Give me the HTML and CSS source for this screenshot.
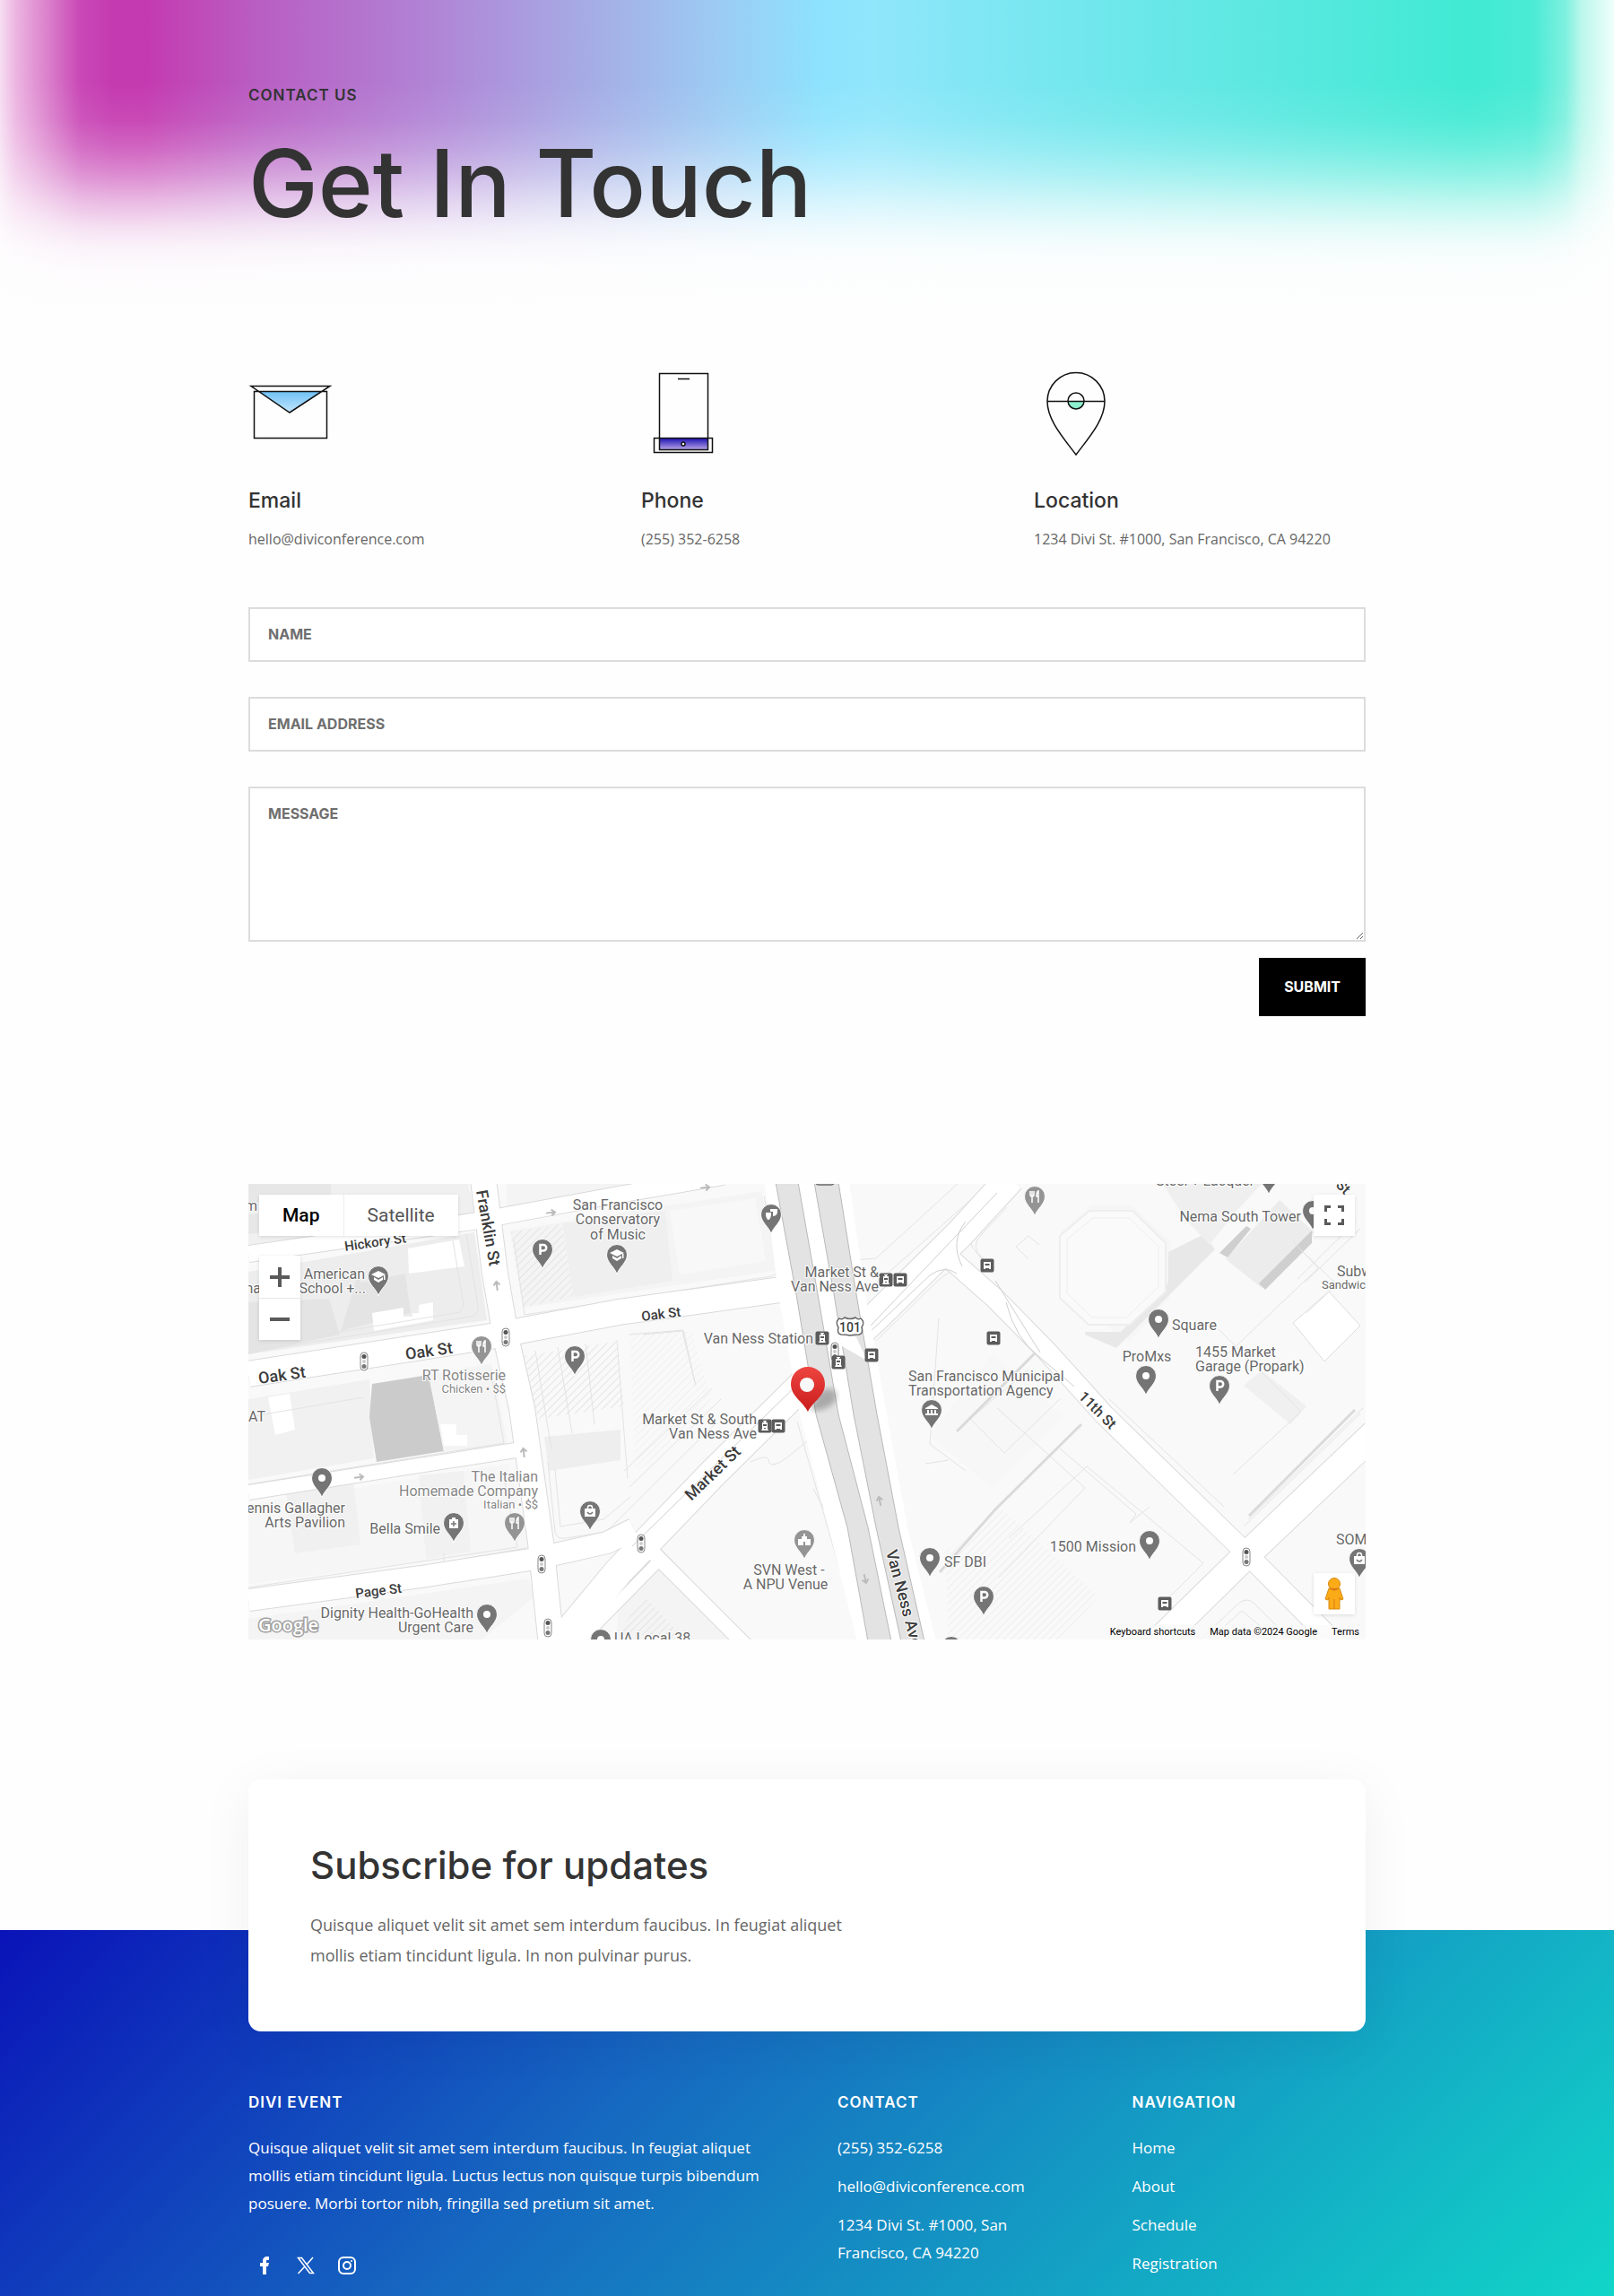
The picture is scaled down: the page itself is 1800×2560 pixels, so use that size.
FILE: index.html
```html
<!DOCTYPE html>
<html lang="en">

<head>
    <meta charset="UTF-8">
    <meta name="viewport" content="width=device-width, initial-scale=1.0">
    <title>Contact Us - Divi Event</title>
    <link rel="stylesheet" href="styles.css">
</head>

<body>
    <header class="hero">
        <div class="container">
            <p class="eyebrow">Contact Us</p>
            <h1>Get In Touch</h1>
        </div>
    </header>

    <main>
        <section class="container info">
            <div class="info-item">
                <svg class="info-icon" viewBox="0 0 94 94" aria-hidden="true">
                    <defs>
                        <linearGradient id="mailFill" x1="0" y1="0" x2="0" y2="1">
                            <stop offset="0" stop-color="#6cc0f6" />
                            <stop offset="1" stop-color="#c4e6fd" />
                        </linearGradient>
                    </defs>
                    <path d="M11 22h71L46 46z" fill="url(#mailFill)" />
                    <path d="M6.500 22.500h81v52h-81zM3 16.500h88L46 46z" class="line" />
                </svg>
                <h2>Email</h2>
                <p>hello@diviconference.com</p>
            </div>
            <div class="info-item">
                <svg class="info-icon" viewBox="0 0 94 94" aria-hidden="true">
                    <defs>
                        <linearGradient id="phoneFill" x1="0" y1="0" x2="0" y2="1">
                            <stop offset="0" stop-color="#1d10b4" />
                            <stop offset="1" stop-color="#b9a6e6" />
                        </linearGradient>
                    </defs>
                    <path d="M20.500 74.500h54v13h-54z" fill="url(#phoneFill)" />
                    <path d="M20.500 2.500h54v85h-54zM14.500 74.500h65v16h-65zM41 8.500h13" class="line" />
                    <circle cx="47" cy="81" r="2" class="line white" />
                </svg>
                <h2>Phone</h2>
                <p>(255) 352-6258</p>
            </div>
            <div class="info-item">
                <svg class="info-icon" viewBox="0 0 94 94" aria-hidden="true">
                    <path d="M38 33.500h18a9 9 0 0 1-18 0z" fill="#8df0cf" />
                    <path d="M47 93C32 73 15 54 15 33.500a32 32 0 0 1 64 0C79 54 62 73 47 93zM15 33.500h64" class="line" />
                    <circle cx="47" cy="33" r="9" class="line" />
                </svg>
                <h2>Location</h2>
                <p>1234 Divi St. #1000, San Francisco, CA 94220</p>
            </div>
        </section>

        <form class="container contact-form">
            <input type="text" name="name" placeholder="NAME" aria-label="Name">
            <input type="email" name="email" placeholder="EMAIL ADDRESS" aria-label="Email address">
            <textarea name="message" placeholder="MESSAGE" aria-label="Message"></textarea>
            <button type="submit" class="submit">SUBMIT</button>
        </form>

        <section class="container">
            <div class="map">
                <svg class="map-canvas" viewBox="0 0 1246 508" preserveAspectRatio="xMidYMid slice" role="img" aria-label="Map">
                    <defs>
                        <pattern id="hatch" width="6" height="6" patternUnits="userSpaceOnUse" patternTransform="rotate(45)">
                            <path d="M0 0v6" stroke="#e4e4e4" stroke-width="2" />
                        </pattern>
                        <linearGradient id="marker" x1="0" y1="0" x2="0" y2="1">
                            <stop offset="0" stop-color="#ee4540" />
                            <stop offset="1" stop-color="#c91c1c" />
                        </linearGradient>
                        <filter id="soft">
                            <feGaussianBlur stdDeviation="3" />
                        </filter>
                        <g id="pin-dot">
                            <path class="pin" d="M0 22C-2 14-11.500 9-11.500 0a11.500 11.500 0 0 1 23 0C11.500 9 2 14 0 22z" />
                            <circle r="4" fill="#fff" />
                        </g>
                        <g id="pin-p">
                            <path class="pin" d="M0 22C-2 14-11.500 9-11.500 0a11.500 11.500 0 0 1 23 0C11.500 9 2 14 0 22z" />
                            <path d="M-2.500 6V-5H1a3 3 0 0 1 0 6.500h-3.500" fill="none" stroke="#fff" stroke-width="2.500" />
                        </g>
                        <g id="pin-school">
                            <path class="pin" d="M0 22C-2 14-11.500 9-11.500 0a11.500 11.500 0 0 1 23 0C11.500 9 2 14 0 22z" />
                            <path d="M0-6l8 4-8 4-8-4zM-5 1l5 3 5-3v3L0 7l-5-3zM6-1h1.500v5H6z" fill="#fff" />
                        </g>
                        <g id="pin-food">
                            <path class="pin pale" d="M0 22C-2 14-11.500 9-11.500 0a11.500 11.500 0 0 1 23 0C11.500 9 2 14 0 22z" />
                            <path d="M-5-6v4q0 2 2 2t2-2v-4M-3-6V7M4 7V-6q-2 1-2 6h2" fill="none" stroke="#fff" stroke-width="1.500" />
                        </g>
                        <g id="pin-bag">
                            <path class="pin" d="M0 22C-2 14-11.500 9-11.500 0a11.500 11.500 0 0 1 23 0C11.500 9 2 14 0 22z" />
                            <path d="M-6-3H6V6H-6z" fill="#fff" />
                            <path d="M-2.500-3v-1a2.500 2.500 0 0 1 5 0v1" fill="none" stroke="#fff" stroke-width="1.500" />
                            <path d="M-3 1q3 4 6 0" fill="none" stroke="#757575" stroke-width="1.500" />
                        </g>
                        <g id="pin-bank">
                            <path class="pin" d="M0 22C-2 14-11.500 9-11.500 0a11.500 11.500 0 0 1 23 0C11.500 9 2 14 0 22z" />
                            <path d="M-7-2l7-4 7 4v1H-7zM-5 0h2v4h-2zM-1 0h2v4h-2zM3 0h2v4H3zM-7 4H7v2H-7z" fill="#fff" />
                        </g>
                        <g id="pin-med">
                            <path class="pin" d="M0 22C-2 14-11.500 9-11.500 0a11.500 11.500 0 0 1 23 0C11.500 9 2 14 0 22z" />
                            <path d="M-5-4H5V6H-5zM-2-6h4v2h-4z" fill="#fff" />
                            <path d="M0-2v6M-3 1h6" stroke="#757575" stroke-width="1.500" />
                        </g>
                        <g id="pin-venue">
                            <path class="pin pale" d="M0 22C-2 14-11.500 9-11.500 0a11.500 11.500 0 0 1 23 0C11.500 9 2 14 0 22z" />
                            <path d="M-7 6v-7h4v-3h2v-3h2v3h2v3h4v7H1V2h-2v4z" fill="#fff" />
                        </g>
                        <g id="pin-masks">
                            <path class="pin" d="M0 22C-2 14-11.500 9-11.500 0a11.500 11.500 0 0 1 23 0C11.500 9 2 14 0 22z" />
                            <path d="M-6-2h6v3q-1 5-3 5t-3-5zM-1-6h8v4q-1 4-5 4v-5h-3z" fill="#fff" />
                        </g>
                        <g id="bus">
                            <rect x="-7.500" y="-7.500" width="15" height="15" rx="2" fill="#5c5c5c" />
                            <path d="M-4-4h8v8H2V3h-4v1h-2z" fill="#fff" />
                            <path d="M-2.500-2h5v2h-5z" fill="#5c5c5c" />
                        </g>
                        <g id="train">
                            <rect x="-7.500" y="-7.500" width="15" height="15" rx="2" fill="#5c5c5c" />
                            <path d="M-2-6h4v1H1v1h2v7l1 2h-8l1-2v-7h2v-1h-1z" fill="#fff" />
                            <path d="M-2-2h4v2h-4zM-1 2h2v1h-2z" fill="#5c5c5c" />
                        </g>
                        <g id="light">
                            <rect x="-4" y="-10" width="8" height="20" rx="4" fill="#fff" stroke="#888" />
                            <circle cy="-5.500" r="2.500" fill="#555" />
                            <circle r="2" fill="#ccc" />
                            <circle cy="5.500" r="2.500" fill="#777" />
                        </g>
                        <path id="arrow" d="M-6 0H4M0-3.500L4 0 0 3.500" fill="none" stroke="#bbb" stroke-width="2" />
                    </defs>

                    <rect width="1246" height="508" fill="#f9f9f9" />

                    <!-- blocks and buildings -->
                    <g class="blocks">
                        <path d="M0 0h245l8 34L0 68z" fill="#f0f0f0" />
                        <path d="M0 0h92v12L0 22zM0 56l90-12v-16L0 34z" fill="#e7e7e7" />
                        <path d="M0 98l252-44 14 98L0 190z" fill="#ededed" />
                        <path d="M0 132l90-4 12 40-102 22zM125 92v18l50-10 6 44-78 20" fill="#e4e4e4" />
                        <path d="M178 72l57-10 6 30-62 8zM138 144l35-6v10h10v-4h7v-9l16-3v20l-66 12z" fill="#fff" />
                        <path d="M0 240l135-22 5 88L0 330z" fill="#f1f1f1" />
                        <path d="M22 238l24-4 6 40-22 6z" fill="#fff" />
                        <path d="M138 223l63-10 17 85-75 12-8-50z" fill="#cbcbcb" />
                        <path d="M201 213l70-13 18 90-71 9z" fill="#f4f4f4" />
                        <path d="M214 268h18v12h12v12h-26z" fill="#fff" />
                        <path d="M0 358l290-46 24 95L0 446z" fill="#f6f6f6" />
                        <path d="M42 344l75-12 8 70-73 10z" fill="#f0f0f0" />
                        <path d="M190 325l50-5 8 90-50 8z" fill="#f1f1f1" />
                        <path d="M0 485l312-45 8 20-60 48H0z" fill="#f4f4f4" />
                        <path d="M288 0h215l-215 27zM292 52l280-44 20 88-285 42z" fill="#f4f4f4" />
                        <path d="M350 44l115-14 8 78-110 18z" fill="#efefef" />
                        <path d="M470 30l95-14 12 70-96 15z" fill="#f8f8f8" />
                        <path d="M292 54l57-9 14 80-57 13z" fill="url(#hatch)" />
                        <path d="M305 192l106-16 8 72-96 14z" fill="url(#hatch)" />
                        <path d="M330 282l85-8v34l-80 12z" fill="#eee" />
                        <path d="M425 165h70l22 80-85 78z" fill="url(#hatch)" opacity=".4" />
                        <path d="M830 190l80 70-80 80-70-60z" fill="#f7f7f7" />
                        <path d="M778 410l60-50 110 100-40 48H780z" fill="url(#hatch)" opacity=".5" />
                        <path d="M414 430l35-20 95 98H410z" fill="#f4f4f4" />
                        <path d="M412 500l30-40 45 48z" fill="url(#hatch)" />
                        <path d="M905 54l35-30h46l42 40v62l-45 50-60-40-18-26z" fill="#f6f6f6" />
                        <path d="M933 165h40l53-55v-34l40-20 12 17-110 110-35-15z" fill="#e8e8e8" />
                        <path d="M905 58l33-28h48l37 36v54l-40 37h-46l-32-30z" fill="#fafafa" stroke="#eee" stroke-width="2" />
                        <path d="M913 62l29-24h40l33 32v45l-36 34h-38l-28-27z" fill="none" stroke="#eee" />
                        <path d="M1020 0h110l-28 30-30 38-28-30z" fill="#efefef" />
                        <path d="M1090 84l60-66 38 36-58 62z" fill="#ececec" />
                        <path d="M1127 111l59-59v14l-52 52z" fill="#cfcfcf" />
                        <path d="M1083 77l30-30 5 3-26 32z" fill="#cfcfcf" />
                        <path d="M1110 225l20-17 50 40-18 20z" fill="#f0f0f0" />
                        <path d="M1165 155l40-35 35 38-40 40z" fill="#fff" stroke="#ddd" />
                    </g>
                    <g class="outlines">
                        <path d="M278 58l14 96q2 9 12 7l300-46M296 62l12 84 275-43q12-3 9-14L575 14" />
                        <path d="M0 188l248-40q10-2 8-12L243 56M0 182l236-39 4-8-12-72" />
                        <path d="M0 260l128-22M0 335l285-46-15-82M0 450l300-45-15-78M218 412v10l92-16" />
                        <path d="M306 190l18 98M320 186l18 110M345 182l16 96M376 178l10 90M411 174l12 155" />
                        <path d="M334 310l8 78q2 9 12 7l45-7L520 268M342 318l6 64 48-8 30-25" />
                        <path d="M425 168l60-5 14 62M440 168l44-4 14 58M419 320l98-92M425 338l102-98" />
                        <path d="M450 410l98 98M458 405l100 103M413 452q24-18 20-40" />
                        <path d="M560 310q22-10 20 0 5 8 22-6l30-24" />
                        <path d="M675 85l25-2 92-84M690 120l130-115M700 175l70-68q22-20 38 0l80 78" />
                        <path d="M830 20q-30 24-23 50l24 30M846 26l-28 30q-14 14 0 26l12 14" />
                        <path d="M870 84l-14-14 14-12 12 10M890 185l38 40M905 240l-62 60-38-38 65-55" />
                        <path d="M1165 64l28 30-100 95M1174 74l40 38-34 32M1170 106l65-64M1178 110l62-60" />
                        <path d="M835 250l98 89-96 100M848 395l87-80 130 108-50 50M905 295l85 73-7 10 22-18" />
                        <path d="M1098 324l76-70-92-92M1115 374l128-124M1110 382l130-126M1088 360L960 240" />
                        <path d="M1062 508l42-40q10-8 18 0l36 36M1072 508l36-32 38 32" />
                        <path d="M630 340l90 168M612 265l70 243M770 150l-10 140 40 30M755 312l26-4" />
                    </g>
                    <path d="M880 186L790 276M929 268l-96 95-62 70M1234 252l-118 118" fill="none" stroke="#dadada" stroke-width="3" />

                    <!-- streets -->
                    <g class="street-edge">
                        <path d="M0 78L250 42 413 12 530-8" stroke-width="20" />
                        <path d="M0 212L270 170 413 143 615 115" stroke-width="30" />
                        <path d="M0 344L298 297" stroke-width="18" />
                        <path d="M0 464L193 438 320 418 400 400 430 385" stroke-width="26" />
                        <path d="M262-5L275 100 288 175 305 250 326 400 338 515" stroke-width="30" />
                        <path d="M340 520L413 432 516 325 620 222 700 148 793 56 850-6" stroke-width="34" />
                        <path d="M360 520L460 418" stroke-width="14" />
                        <path d="M440 400L560 520" stroke-width="18" />
                        <path d="M765 68L833 128 890 186 955 258 1113 412 1215 515" stroke-width="24" />
                        <path d="M1256 278L1113 414 1010 515" stroke-width="32" />
                    </g>
                    <g class="street">
                        <path d="M0 78L250 42 413 12 530-8" stroke-width="18" />
                        <path d="M0 212L270 170 413 143 615 115" stroke-width="28" />
                        <path d="M0 344L298 297" stroke-width="16" />
                        <path d="M0 464L193 438 320 418 400 400 430 385" stroke-width="24" />
                        <path d="M262-5L275 100 288 175 305 250 326 400 338 515" stroke-width="28" />
                        <path d="M340 520L413 432 516 325 620 222 700 148 793 56 850-6" stroke-width="32" />
                        <path d="M360 520L460 418" stroke-width="12" />
                        <path d="M440 400L560 520" stroke-width="16" />
                        <path d="M765 68L833 128 890 186 955 258 1113 412 1215 515" stroke-width="22" />
                        <path d="M1256 278L1113 414 1010 515" stroke-width="30" />
                    </g>
                    <path d="M428 404L620 216M694 158L835 10M800 42q-18 22-4 50M690 168l70-66q16-12 30-2M833 108l50 80M845 132q10 40 36 60l40 34" fill="none" stroke="#cfcfcf" />

                    <!-- Van Ness Ave -->
                    <path d="M576-2h94l18 125 24 134 23 126 32 127h-88l-32-127-32-126-24-134z" fill="#fff" />
                    <path d="M588-2h25l22 125 23 134 33 126 26 127h-26l-23-127-35-126-22-134zM631-2h27l20 125 23 134 24 126 29 127h-26l-28-127-25-126-22-134z" fill="#e3e3e3" stroke="#b9b9b9" />
                    <path d="M658 165l20 6 12 26-28-16zM644 155l10-12v14z" fill="#fff" />

                    <use href="#arrow" transform="translate(338 32) rotate(-6)" />
                    <use href="#arrow" transform="translate(510 4) rotate(-6)" />
                    <use href="#arrow" transform="translate(124 327) rotate(-8)" />
                    <use href="#arrow" transform="translate(277 113) rotate(-97)" />
                    <use href="#arrow" transform="translate(307 299) rotate(-97)" />
                    <use href="#arrow" transform="translate(704 353) rotate(-102)" />
                    <use href="#arrow" transform="translate(688 441) rotate(76)" />

                    <!-- traffic lights and transit -->
                    <use href="#light" x="129" y="198" />
                    <use href="#light" x="287" y="171" />
                    <use href="#light" x="327" y="424" />
                    <use href="#light" x="334" y="495" />
                    <use href="#light" x="438" y="401" />
                    <use href="#light" x="654" y="187" />
                    <use href="#light" x="1113" y="416" />
                    <use href="#train" x="711" y="107" />
                    <use href="#bus" x="727" y="107" />
                    <use href="#train" x="640" y="172" />
                    <use href="#train" x="658" y="199" />
                    <use href="#bus" x="695" y="191" />
                    <use href="#bus" x="824" y="91" />
                    <use href="#bus" x="831" y="172" />
                    <use href="#train" x="576" y="270" />
                    <use href="#bus" x="591" y="270" />
                    <use href="#bus" x="1022" y="468" />

                    <path d="M659 150q3 2 6-1 6 3 12 0 3 3 6 1 5 4 1 10 2 7-3 8-5 0-10 1-5-1-10-1-5-1-3-8-4-6 1-10z" fill="#fff" stroke="#666" stroke-width="1.500" />
                    <path d="M632-6q0 7 4 7h14q4 0 4-7" fill="#fff" stroke="#666" stroke-width="1.500" />

                    <!-- place pins -->
                    <use href="#pin-school" x="145" y="103" />
                    <use href="#pin-p" x="328" y="73" />
                    <use href="#pin-school" x="411" y="79" />
                    <use href="#pin-masks" x="583" y="34" />
                    <use href="#pin-food" x="260" y="181" />
                    <use href="#pin-p" x="364" y="192" />
                    <use href="#pin-dot" x="82" y="328" />
                    <use href="#pin-med" x="229" y="378" />
                    <use href="#pin-food" x="297" y="378" />
                    <use href="#pin-bag" x="381" y="365" />
                    <use href="#pin-dot" x="266" y="480" />
                    <use href="#pin-dot" x="393" y="508" />
                    <use href="#pin-bank" x="762" y="252" />
                    <use href="#pin-venue" x="620" y="397" />
                    <use href="#pin-dot" x="760" y="417" />
                    <use href="#pin-p" x="820" y="460" />
                    <use href="#pin-dot" x="784" y="516" />
                    <use href="#pin-food" x="877" y="14" />
                    <use href="#pin-dot" x="1138" y="-10" />
                    <use href="#pin-dot" x="1187" y="30" />
                    <use href="#pin-dot" x="1015" y="151" />
                    <use href="#pin-dot" x="1001" y="214" />
                    <use href="#pin-p" x="1083" y="225" />
                    <use href="#pin-dot" x="1005" y="398" />
                    <use href="#pin-bag" x="1239" y="418" />

                    <g class="road-name">
                        <text transform="translate(108 75) rotate(-8)" font-size="15">Hickory St</text>
                        <text transform="translate(254 8) rotate(80)" font-size="18">Franklin St</text>
                        <text transform="translate(12 223) rotate(-8)" font-size="18">Oak St</text>
                        <text transform="translate(176 196) rotate(-8)" font-size="18">Oak St</text>
                        <text transform="translate(439 153) rotate(-7)" font-size="15">Oak St</text>
                        <text transform="translate(120 462) rotate(-7)" font-size="15">Page St</text>
                        <text transform="translate(494 354) rotate(-44)" font-size="18">Market St</text>
                        <text transform="translate(925 238) rotate(45)" font-size="16">11th St</text>
                        <text transform="translate(711 410) rotate(75)" font-size="18">Van Ness Ave</text>
                        <text transform="translate(1212 2) rotate(45)" font-size="16">St</text>
                        <text x="671" y="165" font-size="14" text-anchor="middle">101</text>
                    </g>

                    <g class="place" text-anchor="middle">
                        <text x="412" y="29">San Francisco</text>
                        <text x="412" y="45">Conservatory</text>
                        <text x="412" y="62">of Music</text>
                        <text x="1002" y="198">ProMxs</text>
                        <text x="603" y="436">SVN West -</text>
                        <text x="599" y="452">A NPU Venue</text>
                    </g>
                    <g class="place" text-anchor="end">
                        <text x="10" y="30">m</text>
                        <text x="20" y="106">F</text>
                        <text x="14" y="122">na</text>
                        <text x="130" y="106">American</text>
                        <text x="131" y="122">School +...</text>
                        <text x="19" y="265">AT</text>
                        <text x="108" y="367">Dennis Gallagher</text>
                        <text x="108" y="383">Arts Pavilion</text>
                        <text x="214" y="390">Bella Smile</text>
                        <text x="251" y="484">Dignity Health-GoHealth</text>
                        <text x="251" y="500">Urgent Care</text>
                        <text x="703" y="104">Market St &amp;</text>
                        <text x="703" y="120">Van Ness Ave</text>
                        <text x="630" y="178">Van Ness Station</text>
                        <text x="567" y="268">Market St &amp; South</text>
                        <text x="567" y="284">Van Ness Ave</text>
                        <text x="1174" y="42">Nema South Tower</text>
                        <text x="1122" y="2">Steel + Lacquer</text>
                        <text x="990" y="410">1500 Mission</text>
                    </g>
                    <g class="place food" text-anchor="end">
                        <text x="287" y="219">RT Rotisserie</text>
                        <text x="287" y="233" class="small">Chicken • $$</text>
                        <text x="323" y="332">The Italian</text>
                        <text x="323" y="348">Homemade Company</text>
                        <text x="323" y="362" class="small">Italian • $$</text>
                    </g>
                    <g class="place">
                        <text x="736" y="220">San Francisco Municipal</text>
                        <text x="736" y="236">Transportation Agency</text>
                        <text x="1030" y="163">Square</text>
                        <text x="1056" y="193">1455 Market</text>
                        <text x="1056" y="209">Garage (Propark)</text>
                        <text x="776" y="427">SF DBI</text>
                        <text x="1213" y="402">SOMA</text>
                        <text x="1214" y="103">Subway</text>
                        <text x="1197" y="117" class="small">Sandwiches</text>
                        <text x="408" y="512">UA Local 38</text>
                    </g>
                    <text x="11" y="499" class="google">Google</text>

                    <!-- main marker -->
                    <path d="M626 252l10-20q16-8 20 2 2 14-22 19z" fill="#000" opacity=".25" filter="url(#soft)" />
                    <path d="M624 254C618 242 605 237 605 223a19 19 0 0 1 38 0C643 237 630 242 624 254z" fill="url(#marker)" />
                    <circle cx="623" cy="224" r="8" fill="#f8f8f8" />
                </svg>

                <div class="map-types">
                    <button type="button" class="active">Map</button>
                    <button type="button">Satellite</button>
                </div>
                <div class="map-zoom">
                    <button type="button" aria-label="Zoom in">
                        <svg viewBox="0 0 22 22"><path d="M9 0h4v9h9v4h-9v9H9v-9H0V9h9z" /></svg>
                    </button>
                    <button type="button" aria-label="Zoom out">
                        <svg viewBox="0 0 22 22"><path d="M0 9h22v4H0z" /></svg>
                    </button>
                </div>
                <button type="button" class="map-button fullscreen" aria-label="Toggle fullscreen view">
                    <svg viewBox="0 0 22 22"><path d="M0 0h7v3H3v4H0zM15 0h7v7h-3V3h-4zM0 15h3v4h4v3H0zM19 15h3v7h-7v-3h4z" /></svg>
                </button>
                <button type="button" class="map-button pegman" aria-label="Street View">
                    <svg viewBox="0 0 22 36">
                        <path d="M5 12h12l4 12-3 1-1-3v13H5V22l-1 3-3-1z" fill="#fbab18" stroke="#d98a10" />
                        <circle cx="11" cy="7" r="6.500" fill="#fbab18" stroke="#d98a10" />
                        <path d="M6 12q5 4 10 0-5 1-10 0zM11 24v11" fill="#e5601c" stroke="#d97a10" />
                    </svg>
                </button>
                <div class="map-legal">
                    <a href="#">Keyboard shortcuts</a>
                    <span>Map data ©2024 Google</span>
                    <a href="#">Terms</a>
                </div>
            </div>
        </section>

        <section class="container subscribe">
            <div class="subscribe-card">
                <h2>Subscribe for updates</h2>
                <p>Quisque aliquet velit sit amet sem interdum faucibus. In feugiat aliquet mollis etiam tincidunt ligula. In non pulvinar purus.</p>
            </div>
        </section>
    </main>

    <footer class="footer">
        <div class="container footer-grid">
            <div class="about">
                <h3>Divi Event</h3>
                <p>Quisque aliquet velit sit amet sem interdum faucibus. In feugiat aliquet mollis etiam tincidunt ligula. Luctus lectus non quisque turpis bibendum posuere. Morbi tortor nibh, fringilla sed pretium sit amet.</p>
                <div class="social">
                    <a href="#" aria-label="Facebook">
                        <svg viewBox="0 0 20 20"><path d="M8 20v-9H5V7h3V5c0-3 2-5 5-5h2v4h-2c-1 0-1 0-1 1v2h3l-1 4h-2v9z" fill="#fff" /></svg>
                    </a>
                    <a href="#" aria-label="X">
                        <svg viewBox="0 0 20 20"><path d="M1.500 1.500h4l13 17h-4zM18 1l-7 8M8.500 11.500L1.500 19" fill="none" stroke="#fff" stroke-width="1.500" /></svg>
                    </a>
                    <a href="#" aria-label="Instagram">
                        <svg viewBox="0 0 20 20">
                            <rect x="1" y="1" width="18" height="18" rx="5" fill="none" stroke="#fff" stroke-width="2" />
                            <circle cx="10" cy="10" r="4" fill="none" stroke="#fff" stroke-width="2" />
                            <circle cx="15" cy="5" r="1" fill="#fff" />
                        </svg>
                    </a>
                </div>
            </div>
            <div>
                <h3>Contact</h3>
                <ul>
                    <li>(255) 352-6258</li>
                    <li>hello@diviconference.com</li>
                    <li>1234 Divi St. #1000, San Francisco, CA 94220</li>
                </ul>
            </div>
            <nav>
                <h3>Navigation</h3>
                <ul>
                    <li><a href="#">Home</a></li>
                    <li><a href="#">About</a></li>
                    <li><a href="#">Schedule</a></li>
                    <li><a href="#">Registration</a></li>
                </ul>
            </nav>
        </div>
    </footer>
</body>

</html>
```

FILE: styles.css
```css
* {
    margin: 0;
    padding: 0;
    box-sizing: border-box;
}

body {
    background: #fefefe;
    color: #666;
    font-family: 'Open Sans', sans-serif;
    font-size: 17px;
}

h1,
h2,
h3,
.eyebrow {
    font-family: 'Inter', sans-serif;
    color: #333;
    font-weight: 500;
}

a {
    color: inherit;
    text-decoration: none;
}

ul {
    list-style: none;
}

.container {
    width: 90%;
    max-width: 1246px;
    margin: 0 auto;
}

/* Hero */
.hero {
    padding: 93px 0 122px;
    background:
        linear-gradient(180deg, rgba(254, 254, 254, 0) 24%, rgba(254, 254, 254, 0.08) 35%, rgba(254, 254, 254, 0.22) 43%, rgba(254, 254, 254, 0.42) 51%, rgba(254, 254, 254, 0.66) 59%, rgba(254, 254, 254, 0.84) 66%, rgba(254, 254, 254, 0.94) 72%, rgba(254, 254, 254, 0.98) 78%, #fefefe 90%),
        linear-gradient(90deg, #f6def2 0%, #ecb4e1 1%, #da7fcb 3%, #c948b6 5%, #c43ab0 7%, #c43ab0 9%, #b95ec3 16%, #b085d6 27%, #a5aee6 37%, #9bcdf4 45%, #8de3fd 51%, #90e6fb 54%, #76e7ef 65%, #5ce8e1 78%, #40ead3 91%, #4bebd5 95%, #7ff0df 97%, #bbf7ec 98%, #effffb 100%);
}

.eyebrow {
    font-size: 17px;
    line-height: 26px;
    font-weight: 600;
    letter-spacing: 1px;
    text-transform: uppercase;
    margin-bottom: 28px;
}

h1 {
    font-size: 104px;
    line-height: 114px;
}

/* Contact details */
.info {
    display: grid;
    grid-template-columns: repeat(3, 1fr);
    gap: 68px;
    padding-top: 31px;
}

.info-icon {
    display: block;
    width: 94px;
    height: 94px;
    margin-bottom: 36px;
}

.line {
    fill: none;
    stroke: #111;
    stroke-width: 1.5;
}

.line.white {
    fill: #fff;
}

.info h2 {
    font-size: 23px;
    line-height: 28px;
    margin-bottom: 14px;
}

.info p {
    font-size: 16px;
    line-height: 30px;
}

/* Form */
.contact-form {
    display: flex;
    flex-direction: column;
    gap: 39px;
    padding-top: 61px;
}

.contact-form input,
.contact-form textarea {
    display: block;
    width: 100%;
    height: 61px;
    padding: 0 20px 1px;
    border: 2px solid #dcdcdc;
    border-radius: 0;
    background: #fff;
    font-family: 'Inter', sans-serif;
    font-size: 16px;
    font-weight: 700;
    color: #666;
}

.contact-form textarea {
    height: 173px;
    padding: 16px 20px;
    line-height: 24px;
}

.contact-form ::placeholder {
    color: #6f6f6f;
    opacity: 1;
}

.submit {
    align-self: flex-end;
    margin-top: -21px;
    padding: 0 28px;
    border: none;
    background: #000;
    color: #fff;
    font-family: 'Inter', sans-serif;
    font-size: 16px;
    font-weight: 700;
    line-height: 65px;
    cursor: pointer;
}

/* Map */
.map {
    position: relative;
    margin-top: 187px;
    overflow: hidden;
    font-family: 'Roboto', sans-serif;
}

.map-canvas {
    display: block;
    width: 100%;
    height: auto;
}

.outlines {
    fill: none;
    stroke: #e3e3e3;
}

.street,
.street-edge {
    fill: none;
    stroke: #fff;
}

.street-edge {
    stroke: #dadada;
}

.pin {
    fill: #757575;
    stroke: #fff;
}

.pin.pale {
    fill: #949494;
}

.place,
.road-name {
    paint-order: stroke;
    stroke: #fff;
    stroke-width: 2px;
    stroke-linejoin: round;
}

.place {
    fill: #686868;
    font-size: 16px;
}

.food {
    fill: #868686;
}

.small {
    font-size: 13px;
}

.road-name {
    fill: #3c3c3c;
    font-weight: 500;
}

.google {
    fill: #fff;
    stroke: #a0a0a0;
    stroke-width: 3px;
    paint-order: stroke;
    font-family: 'Open Sans', sans-serif;
    font-weight: 600;
    font-size: 20px;
}

.map button {
    border: none;
    background: #fff;
    font-family: inherit;
    cursor: pointer;
}

.map button svg {
    display: block;
    width: 22px;
    fill: #5a5a5a;
}

.map-types,
.map-zoom,
.map-button {
    position: absolute;
    display: flex;
    background: #fff;
    box-shadow: 0 1px 4px rgba(0, 0, 0, 0.12);
}

.map-types {
    top: 12px;
    left: 12px;
    height: 46px;
}

.map-types button {
    padding: 0 26px;
    font-size: 21px;
    color: #565656;
}

.map-types button + button {
    border-left: 1px solid #eee;
}

.map-types .active {
    color: #000;
    font-weight: 500;
}

.map-zoom {
    top: 80px;
    left: 12px;
    flex-direction: column;
}

.map-zoom button {
    display: grid;
    place-items: center;
    width: 46px;
    height: 47px;
}

.map-zoom button + button {
    border-top: 1px solid #e6e6e6;
}

.map-button {
    right: 12px;
    width: 46px;
    height: 46px;
    align-items: center;
    justify-content: center;
}

.fullscreen {
    top: 12px;
}

.pegman {
    bottom: 28px;
}

.map-legal {
    position: absolute;
    right: 0;
    bottom: 0;
    display: flex;
    gap: 16px;
    padding: 0 7px;
    background: rgba(250, 250, 250, 0.7);
    color: #000;
    font-size: 11px;
    line-height: 16px;
}

/* Subscribe */
.subscribe {
    padding-top: 156px;
}

.subscribe-card {
    position: relative;
    margin-bottom: -113px;
    padding: 69px 69px 68px;
    border-radius: 14px;
    background: #fff;
    box-shadow: 0 10px 60px rgba(0, 0, 0, 0.06);
}

.subscribe-card h2 {
    font-size: 42px;
    line-height: 54px;
    margin-bottom: 22px;
}

.subscribe-card p {
    max-width: 630px;
    font-size: 18px;
    line-height: 34px;
}

/* Footer */
.footer {
    padding: 179px 0 23px;
    background: linear-gradient(135deg, #0a13b8 0%, #1669c0 40%, #11d6c8 100%);
    color: #fff;
}

.footer-grid {
    display: grid;
    grid-template-columns: repeat(4, 1fr);
    gap: 68px;
}

.about {
    grid-column: span 2;
}

.footer h3 {
    color: #fff;
    font-size: 17px;
    line-height: 26px;
    font-weight: 600;
    letter-spacing: 1px;
    text-transform: uppercase;
    margin-bottom: 22px;
}

.footer p,
.footer li {
    font-size: 17px;
    line-height: 31px;
}

.footer li + li {
    margin-top: 12px;
}

.social {
    display: flex;
    gap: 10px;
    margin-top: 36px;
}

.social a {
    display: grid;
    place-items: center;
    width: 36px;
    height: 36px;
}

.social svg {
    width: 20px;
    height: 20px;
}
```
